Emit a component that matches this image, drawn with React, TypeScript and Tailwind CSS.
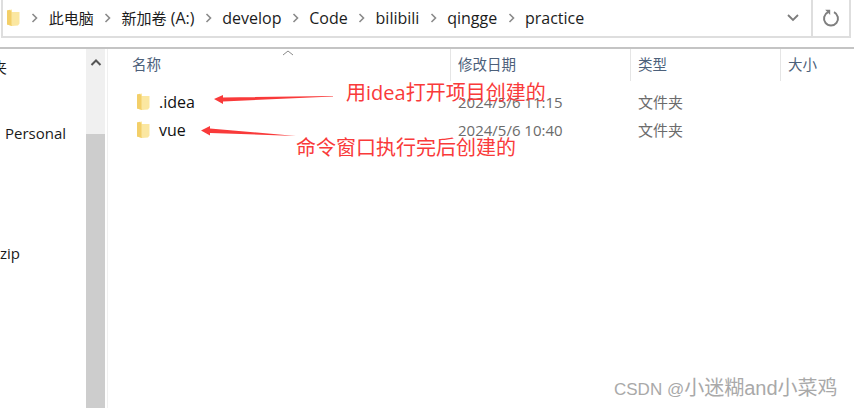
const sans = { fontFamily: '"Open Sans", "Noto Sans CJK SC", sans-serif' };

function Folder() {
  return (
    <svg width="13" height="18" viewBox="0 0 13 18" className="shrink-0">
      <path d="M0 1.5 L5 0.5 L5 3 L12.5 3 L12.5 14.5 L11 16.5 L5 17 L0 15.5 Z" fill="#fbe7a1" />
      <path d="M0 1.5 L3 0.8 L4.5 3 L4.5 15.5 L5 17 L0 15.5 Z" fill="#f3cf69" />
    </svg>
  );
}

function Crumb({ children }: { children: React.ReactNode }) {
  return (
    <>
      <svg width="7" height="12" viewBox="0 0 7 12" className="shrink-0">
        <path d="M1.5 2 L5.5 6 L1.5 10" fill="none" stroke="#8a8a8a" strokeWidth="1.6" />
      </svg>
      <span className="whitespace-nowrap">{children}</span>
    </>
  );
}

function Row({ name, date }: { name: string; date: string }) {
  return (
    <div className="flex h-[28px] items-center">
      <div className="flex w-[347px] items-center gap-[9px] pl-[29px]">
        <Folder />
        <span className="text-[16px] text-[#111]">{name}</span>
      </div>
      <span className="w-[183px] pl-[3px] text-[15px] text-[#6b6b6b]">{date}</span>
      <span className="text-[15px] text-[#6b6b6b]">文件夹</span>
    </div>
  );
}

function Arrow({ className, w, h, d }: { className: string; w: number; h: number; d: string }) {
  return (
    <svg width={w} height={h} viewBox={`0 0 ${w} ${h}`} className={className}>
      <path d={d} fill="#f93a3a" />
    </svg>
  );
}

export default function App() {
  return (
    <div className="relative flex h-[408px] w-[854px] flex-col overflow-hidden bg-white" style={sans}>
      <div className="flex h-[38px] items-stretch pl-[1px] pr-[3px]">
        <div className="flex flex-1 items-center border-x-2 border-b-2 border-[#dedede]">
          <div className="flex flex-1 items-center gap-[10.4px] pl-[4px] text-[16px] text-[#1c1c1c]">
            <div className="mr-[1px] flex shrink-0">
              <Folder />
            </div>
            <Crumb><span className="text-[15px]">此电脑</span></Crumb>
            <Crumb><span className="text-[15px]">新加卷</span> (A:)</Crumb>
            <Crumb>develop</Crumb>
            <Crumb>Code</Crumb>
            <Crumb>bilibili</Crumb>
            <Crumb>qingge</Crumb>
            <Crumb>practice</Crumb>
          </div>
          <svg width="14" height="10" viewBox="0 0 14 10" className="mr-[11px]">
            <path d="M2 2 L7 7 L12 2" fill="none" stroke="#7c7c7c" strokeWidth="1.8" />
          </svg>
          <div className="flex h-full w-[38px] items-center justify-center border-l-2 border-[#dedede]">
            <svg width="18" height="18" viewBox="0 0 18 18">
              <path d="M6 3.2 A7 7 0 1 0 12 3.2" fill="none" stroke="#7f7f7f" strokeWidth="2" />
              <path d="M3.2 0.8 L8.2 0.8 L8.2 6 Z" fill="#7f7f7f" />
            </svg>
          </div>
        </div>
      </div>

      <div className="mt-[9px] flex min-h-0 flex-1 border-t-2 border-[#c4c4c4]">
        <div className="relative w-[86px] shrink-0 text-[15px] text-[#1a1a1a]">
          <span className="absolute left-[-8px] top-[7px] text-[15px]">夹</span>
          <span className="absolute left-[5px] top-[73px]">Personal</span>
          <span className="absolute left-[-4px] top-[193px]">.zip</span>
        </div>
        <div className="flex w-[19px] shrink-0 flex-col bg-[#f0f0f0]">
          <div className="flex h-[85px] justify-center pt-[9px]">
            <svg width="12" height="9" viewBox="0 0 12 9">
              <path d="M1.5 7 L6 2.5 L10.5 7" fill="none" stroke="#555" strokeWidth="2" />
            </svg>
          </div>
          <div className="flex-1 bg-[#cdcdcd]" />
        </div>
        <div className="w-[3px] shrink-0 border-r border-[#f0f0f0]" />
        <div className="flex min-w-0 flex-1 flex-col">
          <div className="relative flex h-[32px] items-center text-[14.5px] text-[#4c607a]">
            <svg width="12" height="6" viewBox="0 0 12 6" className="absolute left-[174px] top-[1px]">
              <path d="M1 5 L6 1 L11 5" fill="none" stroke="#8a8a8a" strokeWidth="1" />
            </svg>
            <span className="w-[342px] pl-[24px]">名称</span>
            <span className="flex h-full w-[180px] items-center border-l border-[#e5e5e5] pl-[7px]">修改日期</span>
            <span className="flex h-full w-[150px] items-center border-l border-[#e5e5e5] pl-[7px]">类型</span>
            <span className="flex h-full items-center border-l border-[#e5e5e5] pl-[7px]">大小</span>
          </div>
          <div className="flex flex-col pt-[7px]">
            <Row name=".idea" date="2024/5/6 11:15" />
            <Row name="vue" date="2024/5/6 10:40" />
          </div>
        </div>
      </div>

      <span className="absolute left-[346px] top-[80px] whitespace-nowrap text-[20px] leading-[26px] text-[#f93a3a]">用idea打开项目创建的</span>
      <span className="absolute left-[296px] top-[135px] whitespace-nowrap text-[20px] leading-[26px] text-[#f93a3a]">命令窗口执行完后创建的</span>
      <Arrow className="absolute left-[213px] top-[93px]" w={122} h={14} d="M1 6 L10 2 L10 4.5 L120 3 L120 3.6 L10 8.5 L10 11 Z" />
      <Arrow className="absolute left-[200px] top-[124px]" w={98} h={15} d="M1 6.5 L10 2 L10 4.5 L96 12 L10 9 L10 11.5 Z" />
      <span className="absolute left-[614px] top-[377px] whitespace-nowrap text-[20px] leading-[22px] text-[#a9a9a9]" style={{ fontFamily: '"Liberation Sans", "Noto Sans CJK SC", sans-serif' }}><span className="text-[17px]">CSDN @</span>小迷糊and小菜鸡</span>
    </div>
  );
}
